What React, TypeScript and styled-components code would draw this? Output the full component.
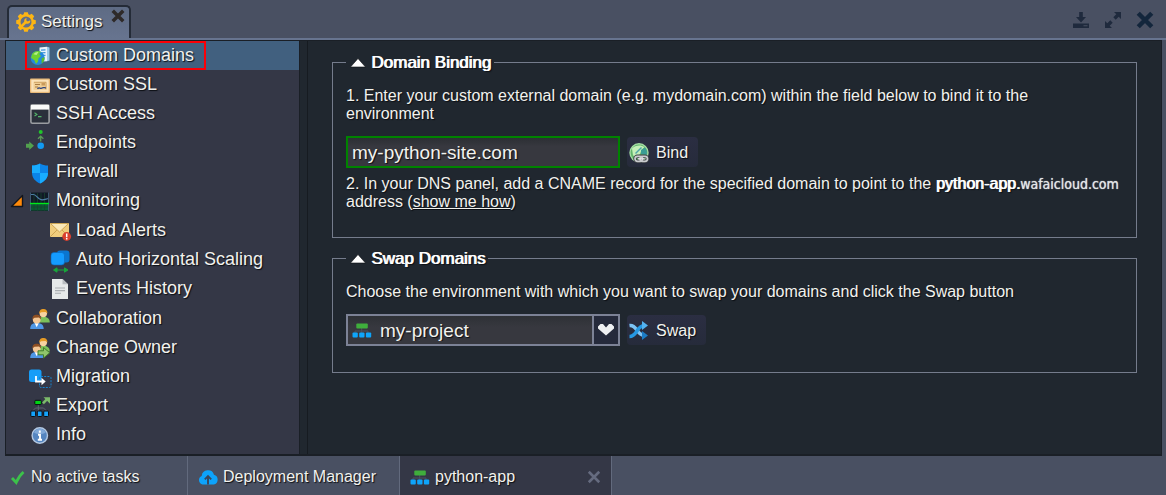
import React, { useState } from "react";
import styled, { createGlobalStyle } from "styled-components";

const GlobalStyle = createGlobalStyle`
  *, *::before, *::after { box-sizing: border-box; }
  body {
    margin: 0;
    background: #495062;
    color: #f2f2ee;
    font-family: "Liberation Sans", Arial, sans-serif;
    font-size: 16px;
    text-shadow: 1px 1px 1px #0b0e13;
  }
  button, input, select {
    font-family: inherit;
    color: inherit;
    text-shadow: inherit;
  }
`;

const Page = styled.div`
  display: flex;
  flex-direction: column;
  min-height: 100vh;
`;

const Header = styled.header`
  display: flex;
  justify-content: space-between;
  height: 40px;
  padding: 5px 12px 0 7px;
  border-bottom: 2px solid #67748f;
`;

const SettingsTab = styled.div`
  display: flex;
  gap: 5px;
  height: 33px;
  padding: 5px 4px 0 7px;
  border: 2px solid #242b37;
  border-bottom: 0;
  border-radius: 5px 5px 0 0;
  background: linear-gradient(#5e6b84, #67748f);
`;

const TabTitle = styled.h1`
  margin: 0;
  font-size: 17px;
  font-weight: 400;
  line-height: 20px;
`;

const IconButton = styled.button`
  display: block;
  padding: 0;
  border: 0;
  background: none;
  line-height: 0;
  cursor: pointer;
`;

const TabClose = styled(IconButton)`
  align-self: flex-start;
  margin: -3px 0 0 4px;
`;

const WindowTools = styled.div`
  display: flex;
  align-items: flex-start;
  gap: 14px;
  padding-top: 6px;
`;

const Body = styled.div`
  display: flex;
  flex: 1;
  margin: 0 4px 0 5px;
  border: 1px solid #1a1f26;
  border-width: 1px 1px 2px;
  background: #20272f;
`;

const Sidebar = styled.nav`
  flex: none;
  width: 294px;
  background: #343746;
  border-right: 1px solid #1a1f26;
`;

const NavList = styled.ul<{ $nested?: boolean }>`
  list-style: none;
  margin: 0;
  padding: ${(p) => (p.$nested ? "1px 0" : "0")};
`;

const NavRow = styled.a<{ $active?: boolean; $nested?: boolean }>`
  display: flex;
  align-items: center;
  height: 29px;
  padding-left: ${(p) => (p.$nested ? 39 : 19)}px;
  background: ${(p) => (p.$active ? "#41607f" : "transparent")};
  color: inherit;
  font-size: 18px;
  text-decoration: none;
  position: relative;
`;

const NavLabel = styled.span<{ $marked?: boolean }>`
  display: flex;
  align-items: center;
  gap: 6px;
  height: 29px;
  padding: 0 10px 0 3px;
  border: 2px solid ${(p) => (p.$marked ? "#fb0007" : "transparent")};
`;

const Expander = styled.span`
  position: absolute;
  left: 4px;
  top: 8px;
  line-height: 0;
`;

const Content = styled.main`
  flex: 1;
  min-width: 0;
  margin-left: 7px;
  padding: 11px 24px 20px;
  border-left: 1px solid #161b21;
`;

const Group = styled.fieldset`
  min-width: 0;
  margin: 0 0 10px;
  padding: 15px 16px 26px 13px;
  border: 1px solid #757c8c;
`;

const GroupTitle = styled.legend`
  padding: 0 3px 0 4px;
`;

const Toggle = styled.button`
  display: flex;
  align-items: center;
  gap: 5px;
  height: 20px;
  padding: 2px 0 0;
  border: 0;
  background: none;
  color: #fff;
  font-size: 17px;
  text-shadow: 1px 0 0 #fff, 2px 1px 1px #0b0e13;
  cursor: pointer;
`;

const Note = styled.label`
  display: block;
  line-height: 18px;
`;

const Paragraph = styled.p`
  margin: 7px 0 0;
  line-height: 18px;
`;

const Strong = styled.strong`
  color: #fff;
  font-weight: 400;
  text-shadow: 1px 0 0 #fff, 2px 1px 1px #0b0e13;
  white-space: nowrap;
`;

const Host = styled.span`
  font-family: "DejaVu Sans Condensed", "Open Sans", sans-serif;
  font-size: 14px;
  line-height: 1;
  color: #e4e6e8;
  text-shadow: 0 0 1px #e4e6e8;
`;

const TextLink = styled.a`
  color: inherit;
`;

const FieldRow = styled.div`
  display: flex;
  align-items: center;
  gap: 7px;
  margin-top: 13px;
`;

const DomainInput = styled.input`
  width: 274px;
  height: 32px;
  padding: 2px 4px 0;
  border: 2px solid #008300;
  border-radius: 0;
  outline: 0;
  background: linear-gradient(#2c2f34, #37383f 30%);
  font-size: 19px;
`;

const Action = styled.button`
  display: flex;
  align-items: center;
  gap: 7px;
  height: 30px;
  padding: 1px 10px 0 2px;
  border: 0;
  border-radius: 4px;
  background: linear-gradient(#2b2e42, #262b3b);
  font-size: 16px;
  cursor: pointer;
`;

const Picker = styled.div`
  position: relative;
  width: 274px;
  height: 32px;
`;

const PickerSelect = styled.select`
  width: 100%;
  height: 32px;
  padding: 0 30px 0 32px;
  border: 2px solid #7c8296;
  border-radius: 0;
  outline: 0;
  appearance: none;
  background: linear-gradient(#2e3136, #37383f 40%);
  font-size: 19px;
`;

const PickerIcon = styled.span`
  position: absolute;
  left: 6px;
  top: 6px;
  line-height: 0;
  pointer-events: none;
`;

const PickerArrow = styled.span`
  position: absolute;
  right: 2px;
  top: 2px;
  bottom: 2px;
  display: flex;
  align-items: center;
  padding: 0 4px;
  border-left: 2px solid #7c8296;
  background: #252a3b;
  pointer-events: none;
`;

const StatusBar = styled.footer`
  display: flex;
  height: 39px;
`;

const StatusItem = styled.div<{ $width: number; $active?: boolean }>`
  display: flex;
  align-items: center;
  gap: 5px;
  width: ${(p) => p.$width}px;
  padding: 3px 10px 0 10px;
  border-right: 1px solid #626a7d;
  background: ${(p) => (p.$active ? "#343746" : "transparent")};
`;

const Grow = styled.span`
  flex: 1;
`;

type IconProps = { children: React.ReactNode; size?: number };

const Icon = ({ children, size = 20 }: IconProps) => (
  <svg width={size} height={size} viewBox={`0 0 ${size} ${size}`} fill="none" overflow="visible" aria-hidden="true">
    {children}
  </svg>
);

const GearIcon = () => (
  <Icon>
    <g fill="#fcb514">
      {[0, 45, 90, 135, 180, 225, 270, 315].map((a) => (
        <path key={a} d="M7.2 4L8.2 0.2h3.6L12.8 4z" transform={`rotate(${a} 10 10)`} />
      ))}
    </g>
    <circle cx="10" cy="10" r="6.700" stroke="#fcb514" strokeWidth="2.400" />
    <path d="M5 14.800L9.800 10" stroke="#fcb514" strokeWidth="2.600" />
    <path d="M14.200 8.200a3 3 0 1 1-3.600-2.300l-.4 2.400 1.500 1.200z" fill="#fcb514" />
  </Icon>
);

const CrossIcon = ({ size, color, weight }: { size: number; color: string; weight: number }) => (
  <svg width={size} height={size} viewBox="0 0 16 16" aria-hidden="true">
    <path d="M2 2l12 12M14 2L2 14" stroke={color} strokeWidth={weight} />
  </svg>
);

const DomainsIcon = () => (
  <Icon>
    <path d="M9.500 1.500L17 0.800v14.400l-7.500.6z" fill="#e9f3fb" />
    <path d="M17 0.800l2.500.8v13L17 15.200z" fill="#9ccbea" />
    <path d="M11 4.200l4.500-.3M11 6.800l4.500-.2M13 9.400h2.500" stroke="#3c95d8" strokeWidth="1.300" />
    <circle cx="7.700" cy="12" r="7" fill="#2389dd" />
    <path d="M2 8.200C4 4.800 8.500 4.200 11 6l-1.800 2 1.800 2-2.600 2.400-.4 3.200-2 2.400L4.500 14.500 1 11.800z" fill="#6ed12f" />
    <path d="M11.600 12.500l2.800-1.500c.5 3-.8 5.400-2.800 6.600z" fill="#57bd2a" />
    <path d="M3.500 8.200c1.600-2 3.600-2.600 5-2.200L6.500 9z" fill="#b8f08a" />
  </Icon>
);

const CertificateIcon = () => (
  <Icon>
    <rect y="3.500" width="20" height="14.500" rx="1" fill="#e9b978" />
    <rect x="1.300" y="4.800" width="17.400" height="12" fill="#fbe3bb" />
    <rect x="3.500" y="6.800" width="13" height="8" fill="#f1cf96" />
    <path d="M4 7.300h12v7" stroke="#c79555" strokeWidth="0.800" />
    <path d="M5 9.500h5M5 12h3" stroke="#a97c45" />
    <rect x="11.500" y="8" width="3.500" height="2.500" fill="#c99a5b" />
    <path d="M7.500 14c2-3 2.400.4 4-.8s2-.6 4.500-.2" stroke="#31457e" strokeWidth="1.300" />
  </Icon>
);

const TerminalIcon = () => (
  <Icon>
    <rect x="0.900" y="0.800" width="18.200" height="18.500" rx="1.500" fill="#2b303b" stroke="#9b9da1" strokeWidth="1.600" />
    <path d="M1 1h18v4.600H1z" fill="#fafafa" />
    <path d="M4.500 8.800l2.400 1.600-2.400 1.600M8 12.600h3.500" stroke="#54b66a" strokeWidth="1.100" />
  </Icon>
);

const EndpointsIcon = () => (
  <Icon>
    <circle cx="10.700" cy="-1" r="2" fill="#20c62a" />
    <path d="M10.700 8.500V4M8 5.800l2.700-2.600 2.700 2.600" stroke="#5a9b57" strokeWidth="1.300" />
    <circle cx="10.700" cy="12.700" r="3.300" fill="#129af0" />
    <path d="M-4 10.700h3.200V8.500L4 12.700l-4.800 4.200v-2.200H-4z" fill="#52a14e" />
  </Icon>
);

const ShieldIcon = () => (
  <Icon>
    <path d="M10 1.500c2.500 1.500 5 2 8 2V11c0 5-3.500 8.500-8 10.500C5.500 19.500 2 16 2 11V3.500c3 0 5.500-.5 8-2z" fill="#0b84e8" />
    <path d="M10 1.500V11H2V3.500c3 0 5.500-.5 8-2zM10 11h8c0 5-3.500 8.500-8 10.500z" fill="#18acff" />
  </Icon>
);

const MonitoringIcon = () => (
  <Icon>
    <rect x="0.500" y="1.500" width="18" height="18.500" fill="#101a26" />
    <rect x="0.500" y="12.500" width="18" height="7" fill="#0a5a33" />
    <path d="M4 2v18M7.500 2v18M11 2v18M14.500 2v18M0 16h18" stroke="#16422f" strokeWidth="0.800" />
    <path d="M0.500 3.500h3c3 0 4 4.600 7.500 5.200 3 .5 5-.8 7.500-1.200" stroke="#4c7da4" strokeWidth="1.200" />
    <path d="M0.500 1.500V20M18.500 1.500V20" stroke="#3d5870" />
    <path d="M0 12.500h19" stroke="#00e81a" strokeWidth="1.400" />
  </Icon>
);

const AlertMailIcon = () => (
  <Icon>
    <rect y="2" width="19" height="14" rx="1" fill="#f0cd7d" />
    <path d="M0.500 2.500L9.500 11l9-8.500z" fill="#fbe9b8" stroke="#c9a04e" strokeWidth="0.900" />
    <path d="M0.500 15.500L7 9M18.500 15.500L12 9" stroke="#c9a04e" strokeWidth="0.900" />
    <circle cx="16.700" cy="15.500" r="4.400" fill="#d9402f" />
    <path d="M16.700 12.600v3.600M16.700 17v1.400" stroke="#fff" strokeWidth="1.500" />
  </Icon>
);

const ScalingIcon = () => (
  <Icon>
    <rect x="7" y="0.500" width="12.500" height="12" rx="3" fill="#0a76d0" />
    <rect x="1" y="2.500" width="13.500" height="12.500" rx="3" fill="#149cff" stroke="#0b67b8" strokeWidth="0.600" />
    <path d="M5 20h10M7 17.800L3.500 20 7 22.200zM14.500 17.800L18 20l-3.500 2.200z" stroke="#18a53a" fill="#18a53a" strokeWidth="1" />
  </Icon>
);

const DocumentIcon = () => (
  <Icon>
    <path d="M2 0h10.500L18 5.200V20H2z" fill="#e6e9ea" />
    <path d="M12.500 0v5.200H18z" fill="#b9bdc1" />
    <path d="M5 9h10M5 11.600h10M5 14.200h6" stroke="#a9adb1" strokeWidth="1.100" />
  </Icon>
);

const People = () => (
  <>
    <path d="M8.500 13.500c0-4 2-5.700 5-5.700s6.300 1.500 6.300 5.700z" fill="#7cc05a" />
    <circle cx="13.300" cy="4.600" r="3.700" fill="#f7d3a2" />
    <path d="M9.200 4.500C9.200 1.200 11 0 13.300 0s4.300 1.200 4.100 4.500L15.500 3l-4.200.2z" fill="#e69b26" />
    <path d="M0.200 20c0-4.500 2.500-6 6.500-6s7 1.500 7 6z" fill="#4f97e6" />
    <path d="M4.700 14.200h4l-2 4z" fill="#fff" />
    <circle cx="6.700" cy="10.500" r="3.900" fill="#f5c896" />
    <path d="M2.400 10.500C2.200 7 4.200 5.700 6.700 5.700s4.500 1.300 4.300 4.800L9 8.600l-4.500.2z" fill="#8e4f22" />
  </>
);

const CollaborationIcon = () => (
  <Icon>
    <People />
  </Icon>
);

const OwnerIcon = () => (
  <Icon>
    <People />
    <path d="M8 12.800h5.500V9.500l6.300 5.300-6.300 5.300v-3.300H8z" fill="#8fc66b" stroke="#427d2b" />
  </Icon>
);

const MigrationIcon = () => (
  <Icon>
    <rect x="-1" y="2.500" width="12.500" height="12.500" rx="2.500" fill="#179df8" />
    <rect x="9.500" y="9.500" width="11.500" height="11" rx="1.500" stroke="#1684cf" strokeDasharray="2 1.200" />
    <path d="M6 9v5.500h7" stroke="#fff" strokeWidth="1.800" />
    <path d="M11.500 10.800l4.200 3.700-4.200 3.700z" fill="#fff" />
  </Icon>
);

const ExportIcon = () => (
  <Icon>
    <path d="M2.500 15l3-3h8l3 3M8.300 9v6" stroke="#5d6370" />
    <rect x="4.800" y="4.300" width="6.500" height="4.300" rx="1" fill="#00d215" stroke="#0a0d12" />
    <g fill="#14a2fb" stroke="#0a0d12">
      <rect x="0.800" y="15" width="4.800" height="5.500" rx="1" />
      <rect x="7.300" y="15" width="4.800" height="5.500" rx="1" />
      <rect x="13.700" y="15" width="4.800" height="5.500" rx="1" />
    </g>
    <path d="M13 7.300l3.600-3.600" stroke="#7cba6a" strokeWidth="2.600" />
    <path d="M13.500 1.200H20v6.500z" fill="#7cba6a" />
  </Icon>
);

const InfoIcon = () => (
  <Icon>
    <circle cx="9.800" cy="10.500" r="7.700" fill="#5585c0" stroke="#b3c8e2" strokeWidth="1.400" />
    <path d="M4 7.500a6.300 6.300 0 0 1 11.600 0c-3 2-8 2.500-11.600 0z" fill="#80a8d8" />
    <path d="M9.800 5.500v2.200M8 9.800h2v4.700M7.800 14.700h4.200" stroke="#fff" strokeWidth="1.900" />
  </Icon>
);

const CheckIcon = () => (
  <Icon size={16}>
    <path d="M2 9l4.200 4.500C8 9.500 10 6 13.500 3" stroke="#3cc24a" strokeWidth="2.800" />
  </Icon>
);

const CloudIcon = () => (
  <Icon>
    <path d="M4.500 17.500a4.500 4.500 0 0 1-.8-8.500A6.300 6.300 0 0 1 16 7.800a5 5 0 0 1-.3 9.700z" fill="#0da3fb" />
    <path d="M10 17.500V9.500M6.800 12.300L10 9l3.200 3.300" stroke="#37475e" strokeWidth="1.900" />
  </Icon>
);

const TopologyIcon = () => (
  <Icon>
    <path d="M3 14v-3h13v3M9.700 8v6" stroke="#4d5261" />
    <rect x="4.300" y="3.500" width="11.500" height="5" rx="1" fill="#3fae3c" />
    <g fill="#0ea5fb">
      <rect x="0.500" y="12.500" width="5.300" height="5" rx="1" />
      <rect x="7.200" y="12.500" width="5.300" height="5" rx="1" />
      <rect x="13.900" y="12.500" width="5.300" height="5" rx="1" />
    </g>
  </Icon>
);

const BindIcon = () => (
  <Icon>
    <circle cx="10" cy="9.800" r="9" fill="#61b56a" stroke="#a4dba4" strokeWidth="1.400" />
    <path d="M3 5.500C6 2 12 1.500 15.500 4l-3 3-1.500 4-3 3-4-1.500z" fill="#c4efb8" />
    <path d="M12 7l4-2.500c2 2.500 2.500 5 1.500 7.500L12 11z" fill="#3a9d94" />
    <path d="M6.500 10.500l6-6" stroke="#4fa3a8" strokeWidth="1.500" />
    <g stroke="#3d4044" strokeWidth="3.400">
      <rect x="6" y="13.300" width="7.500" height="5" rx="2.500" />
      <rect x="11" y="13.300" width="7.500" height="5" rx="2.500" />
    </g>
    <g stroke="#c9cbce" strokeWidth="1.700">
      <rect x="6" y="13.300" width="7.500" height="5" rx="2.500" />
      <rect x="11" y="13.300" width="7.500" height="5" rx="2.500" />
    </g>
    <path d="M9 15.800h6.500" stroke="#e3e4e6" strokeWidth="1.400" />
  </Icon>
);

const SwapIcon = () => (
  <Icon>
    <path d="M0.500 4.500c8-1 6.500 9.500 15 10" stroke="#7cc3f5" strokeWidth="3.400" />
    <path d="M0.500 15.500c8 0 6.500-10.500 15-11" stroke="#2698e2" strokeWidth="3.400" />
    <path d="M13 0l6 4.500L13 9z" fill="#53b2f0" />
    <path d="M13 10l6 4.500-6 4.500z" fill="#1c7cc4" />
  </Icon>
);

type NavItem = { label: string; icon: React.FC; active?: boolean; children?: NavItem[] };

const navItems: NavItem[] = [
  { label: "Custom Domains", icon: DomainsIcon, active: true },
  { label: "Custom SSL", icon: CertificateIcon },
  { label: "SSH Access", icon: TerminalIcon },
  { label: "Endpoints", icon: EndpointsIcon },
  { label: "Firewall", icon: ShieldIcon },
  {
    label: "Monitoring",
    icon: MonitoringIcon,
    children: [
      { label: "Load Alerts", icon: AlertMailIcon },
      { label: "Auto Horizontal Scaling", icon: ScalingIcon },
      { label: "Events History", icon: DocumentIcon },
    ],
  },
  { label: "Collaboration", icon: CollaborationIcon },
  { label: "Change Owner", icon: OwnerIcon },
  { label: "Migration", icon: MigrationIcon },
  { label: "Export", icon: ExportIcon },
  { label: "Info", icon: InfoIcon },
];

const NavTree = ({ items, nested }: { items: NavItem[]; nested?: boolean }) => (
  <NavList $nested={nested}>
    {items.map(({ label, icon: Glyph, active, children }) => (
      <li key={label}>
        <NavRow href="#" $active={active} $nested={nested} aria-current={active ? "page" : undefined}>
          {children && (
            <Expander>
              <Icon size={14}>
                <path d="M12.500 1.500v11H1.500z" fill="#ff8a0a" stroke="#14161c" strokeWidth="1.400" strokeLinejoin="round" />
              </Icon>
            </Expander>
          )}
          <NavLabel $marked={active}>
            <Glyph />
            {label}
          </NavLabel>
        </NavRow>
        {children && <NavTree items={children} nested />}
      </li>
    ))}
  </NavList>
);

const GroupHeading = ({ children }: { children: React.ReactNode }) => (
  <GroupTitle>
    <Toggle type="button" aria-expanded="true">
      <svg width="16" height="10" viewBox="0 0 16 10" aria-hidden="true">
        <path d="M8 0.500L15.500 9H0.500z" fill="#fff" stroke="#0b0e13" strokeWidth="0.600" />
      </svg>
      {children}
    </Toggle>
  </GroupTitle>
);

export default function App() {
  const [domain, setDomain] = useState("my-python-site.com");

  return (
    <Page>
      <GlobalStyle />
      <Header>
        <SettingsTab>
          <GearIcon />
          <TabTitle>Settings</TabTitle>
          <TabClose type="button" aria-label="Close tab">
            <CrossIcon size={14} color="#2e2a29" weight={4} />
          </TabClose>
        </SettingsTab>
        <WindowTools>
          <IconButton type="button" aria-label="Minimize">
            <Icon size={18}>
              <path d="M7.200 1h3.600v5H14L9 11.500 4 6h3.200z" fill="#1f2a3d" />
              <path d="M1 12.500h16V17H1zM11.500 14.300v1h4v-1z" fill="#1f2a3d" fillRule="evenodd" />
            </Icon>
          </IconButton>
          <IconButton type="button" aria-label="Maximize">
            <Icon size={18}>
              <path d="M10 1h7v7l-2.300-2.300-3 3-2.400-2.400 3-3zM1 10l2.300 2.300 3-3 2.400 2.400-3 3L8 17H1z" fill="#1f2a3d" />
            </Icon>
          </IconButton>
          <IconButton type="button" aria-label="Close">
            <CrossIcon size={18} color="#13263c" weight={4} />
          </IconButton>
        </WindowTools>
      </Header>

      <Body>
        <Sidebar aria-label="Settings sections">
          <NavTree items={navItems} />
        </Sidebar>
        <Content>
          <Group>
            <GroupHeading>Domain Binding</GroupHeading>
            <Note htmlFor="domain">
              1. Enter your custom external domain (e.g. mydomain.com) within the field below to bind it to the environment
            </Note>
            <FieldRow>
              <DomainInput id="domain" value={domain} onChange={(e) => setDomain(e.target.value)} />
              <Action type="button">
                <BindIcon />
                Bind
              </Action>
            </FieldRow>
            <Paragraph>
              2. In your DNS panel, add a CNAME record for the specified domain to point to the{" "}
              <Strong>python-app.</Strong>
              <Host>wafaicloud.com</Host> address (<TextLink href="#">show me how</TextLink>)
            </Paragraph>
          </Group>

          <Group>
            <GroupHeading>Swap Domains</GroupHeading>
            <Note htmlFor="environment">
              Choose the environment with which you want to swap your domains and click the Swap button
            </Note>
            <FieldRow>
              <Picker>
                <PickerSelect id="environment">
                  <option>my-project</option>
                </PickerSelect>
                <PickerIcon>
                  <TopologyIcon />
                </PickerIcon>
                <PickerArrow>
                  <svg width="16" height="12" viewBox="0 0 16 12" aria-hidden="true">
                    <path d="M0 2.500L2.500 0h2.500L8 3.500 11 0h2.500L16 2.500v2L8 11.500 0 4.500z" fill="#eef0f2" />
                  </svg>
                </PickerArrow>
              </Picker>
              <Action type="button">
                <SwapIcon />
                Swap
              </Action>
            </FieldRow>
          </Group>
        </Content>
      </Body>

      <StatusBar>
        <StatusItem $width={188}>
          <CheckIcon />
          No active tasks
        </StatusItem>
        <StatusItem $width={212}>
          <CloudIcon />
          Deployment Manager
        </StatusItem>
        <StatusItem $width={212} $active>
          <TopologyIcon />
          python-app
          <Grow />
          <IconButton type="button" aria-label="Close python-app">
            <CrossIcon size={14} color="#656b7f" weight={3} />
          </IconButton>
        </StatusItem>
      </StatusBar>
    </Page>
  );
}
